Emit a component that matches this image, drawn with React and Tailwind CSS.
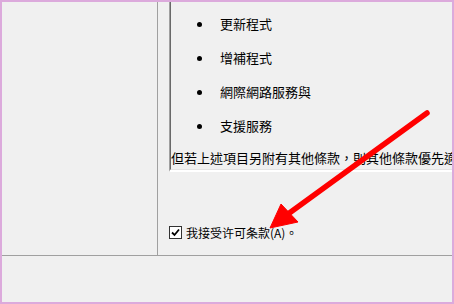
import React from "react";

const items = ["更新程式", "增補程式", "網際網路服務與", "支援服務"];

const App = () => {
  return (
    <div
      className="relative w-[454px] h-[304px] overflow-hidden"
      style={{ fontFamily: '"Noto Sans CJK TC", "Noto Sans", sans-serif' }}
    >
      <div className="w-full h-full border-2 border-[#dcaadc] bg-[#f0f0f0] flex flex-col text-black">
        {/* main area */}
        <div className="h-[253px] flex">
          <div className="w-[156px] shrink-0 border-r border-[#a0a0a0]" />
          <div className="flex-1 flex flex-col pl-[11px] overflow-hidden">
            {/* licence text box, scrolled so its right side is out of view */}
            <div className="h-[170px] w-[320px] shrink-0 border-l border-l-[#a0a0a0] border-b-2 border-b-white overflow-hidden">
              <div className="h-full border-l border-l-[#696969] border-b border-b-[#e3e3e3] overflow-hidden">
                <ul className="pt-[5px] pl-[26px]">
                  {items.map((item) => (
                    <li key={item} className="h-[34px] flex items-center gap-[18px] text-[13px]">
                      <span className="w-[5px] h-[5px] rounded-full bg-black shrink-0" />
                      <span className="whitespace-nowrap">{item}</span>
                    </li>
                  ))}
                </ul>
                <p className="mt-[7px] text-[13px] leading-[16px] whitespace-nowrap">
                  但若上述項目另附有其他條款，則其他條款優先適用。
                </p>
              </div>
            </div>
            {/* accept checkbox */}
            <label className="mt-[54px] flex items-center gap-[4px] text-[12px] leading-[13px]">
              <span className="w-[13px] h-[13px] border border-[#333333] bg-white flex items-center justify-center shrink-0">
                <svg width="9" height="9" viewBox="0 0 9 9">
                  <path d="M1 4.5 L3.5 7 L8 1.5" fill="none" stroke="#000" strokeWidth="1.8" />
                </svg>
              </span>
              <span className="whitespace-nowrap">我接受许可条款(A)。</span>
            </label>
          </div>
        </div>
        {/* button bar */}
        <div className="flex-1 border-t border-[#a0a0a0]" />
      </div>

      {/* red pointer arrow */}
      <svg className="absolute inset-0 pointer-events-none" width="454" height="304" viewBox="0 0 454 304">
        <line x1="427" y1="113" x2="288" y2="214" stroke="#ff0000" strokeWidth="5.5" strokeLinecap="round" />
        <polygon points="270,228 281,204 298,222" fill="#ff0000" stroke="#ff0000" strokeWidth="1" strokeLinejoin="round" />
      </svg>
    </div>
  );
};

export default App;
